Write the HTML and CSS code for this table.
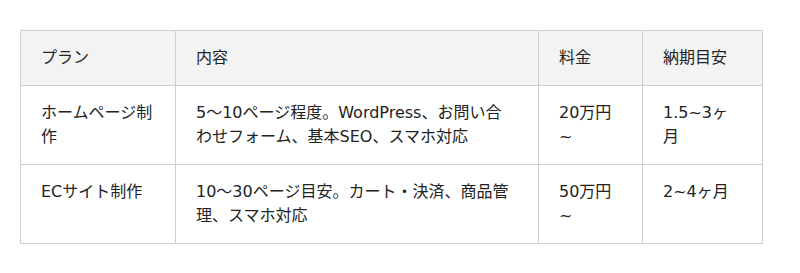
FILE: index.html
```html
<!DOCTYPE html>
<html lang="ja">
<head>
<meta charset="utf-8">
<link rel="stylesheet" href="styles.css">
</head>
<body>
<div class="wrap">
<table class="plans">
<colgroup>
<col class="c1"><col class="c2"><col class="c3"><col class="c4">
</colgroup>
<thead>
<tr><th>プラン</th><th>内容</th><th>料金</th><th>納期目安</th></tr>
</thead>
<tbody>
<tr><td>ホームページ制作</td><td class="desc">5〜10ページ程度。WordPress、お問い合わせフォーム、基本SEO、スマホ対応</td><td>20万円~</td><td>1.5~3ヶ月</td></tr>
<tr><td>ECサイト制作</td><td class="desc">10〜30ページ目安。カート・決済、商品管理、スマホ対応</td><td>50万円~</td><td>2~4ヶ月</td></tr>
</tbody>
</table>
</div>
</body>
</html>
```
FILE: styles.css
```css
html, body {
  margin: 0;
  padding: 0;
  background: #fff;
}
.wrap {
  padding: 30px 20px;
}
.plans {
  width: 742px;
  table-layout: fixed;
  border-collapse: collapse;
  font-family: "DejaVu Sans", "Noto Sans CJK JP", sans-serif;
  font-size: 16px;
  line-height: 24px;
  color: #222;
}
.c1 { width: 155px; }
.c2 { width: 363px; }
.c3 { width: 104px; }
.c4 { width: 120px; }
.plans th, .plans td {
  border: 1px solid #cfcfcf;
  padding: 15px 20px;
  text-align: left;
  vertical-align: top;
  font-weight: normal;
}
.plans .desc {
  padding-right: 24px;
}
.plans th {
  background: #f3f3f3;
}
```
